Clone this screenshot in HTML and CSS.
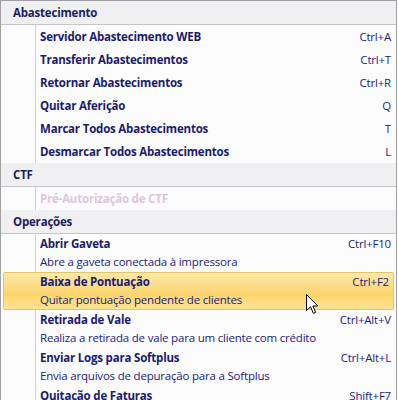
FILE: index.html
```html
<!DOCTYPE html>
<html lang="pt-BR">
<head>
    <meta charset="UTF-8">
    <title>Menu</title>
    <link rel="stylesheet" href="styles.css">
</head>
<body>
    <div class="menu">
        <div class="group-header">Abastecimento</div>
        <div class="items">
            <div class="item"><span class="title">Servidor Abastecimento WEB</span><span class="key">Ctrl+A</span></div>
            <div class="item"><span class="title">Transferir Abastecimentos</span><span class="key">Ctrl+T</span></div>
            <div class="item"><span class="title">Retornar Abastecimentos</span><span class="key">Ctrl+R</span></div>
            <div class="item"><span class="title">Quitar Aferição</span><span class="key">Q</span></div>
            <div class="item"><span class="title">Marcar Todos Abastecimentos</span><span class="key">T</span></div>
            <div class="item"><span class="title">Desmarcar Todos Abastecimentos</span><span class="key">L</span></div>
        </div>

        <div class="group-header">CTF</div>
        <div class="items">
            <div class="item disabled"><span class="title">Pré-Autorização de CTF</span></div>
        </div>

        <div class="group-header">Operações</div>
        <div class="items">
            <div class="item big">
                <div class="line"><span class="title">Abrir Gaveta</span><span class="key">Ctrl+F10</span></div>
                <div class="desc">Abre a gaveta conectada à impressora</div>
            </div>
            <div class="item big hover">
                <div class="line"><span class="title">Baixa de Pontuação</span><span class="key">Ctrl+F2</span></div>
                <div class="desc">Quitar pontuação pendente de clientes</div>
                <svg class="cursor" width="13" height="21" viewBox="0 0 13 21">
                    <path d="M0.5 0.5 L0.5 16.5 L4.5 12.8 L7.3 19.3 L9.6 18.3 L6.9 12 L11.8 12 Z" fill="#fff" stroke="#000" stroke-width="1" stroke-linejoin="miter"/>
                </svg>
            </div>
            <div class="item big">
                <div class="line"><span class="title">Retirada de Vale</span><span class="key">Ctrl+Alt+V</span></div>
                <div class="desc">Realiza a retirada de vale para um cliente com crédito</div>
            </div>
            <div class="item big">
                <div class="line"><span class="title">Enviar Logs para Softplus</span><span class="key">Ctrl+Alt+L</span></div>
                <div class="desc">Envia arquivos de depuração para a Softplus</div>
            </div>
            <div class="item last">
                <span class="title">Quitação de Faturas</span><span class="key">Shift+F7</span>
            </div>
        </div>
    </div>
</body>
</html>
```

FILE: styles.css
```css
body {
    margin: 0;
    background-color: #ffffff;
    font-family: "Open Sans", "Noto Sans", sans-serif;
    font-size: 11.5px;
    letter-spacing: -0.2px;
}

.menu {
    width: 395px;
    border: 1px solid #a0a0a0;
    border-bottom: none;
    background-color: #fcfcfc;
    color: #1b1b6b;
}

.group-header {
    height: 23px;
    line-height: 23px;
    padding-left: 12px;
    background-color: #f0f0f3;
    border-bottom: 1px solid #c6c6c6;
    font-weight: bold;
    color: #1d1d5c;
}

.items {
    background-image: linear-gradient(to right, transparent 34px, #d3d3d3 34px, #d3d3d3 35px, transparent 35px);
}

.item {
    display: flex;
    justify-content: space-between;
    height: 23px;
    line-height: 23px;
    padding: 0 5px 0 39px;
}

.title {
    font-weight: bold;
}

.key {
    color: #1e1e78;
}

.disabled .title {
    color: #dcc6df;
}

.item.big {
    display: block;
    height: 36px;
    line-height: 18px;
    padding-top: 1px;
    padding-bottom: 1px;
}

.item.last {
    height: 15px;
    line-height: 18px;
    padding-top: 1px;
}

.line {
    display: flex;
    justify-content: space-between;
}

.desc {
    color: #22227a;
}

.item.hover {
    position: relative;
    margin: 0 2px;
    padding: 0 4px 0 36px;
    border: 1px solid #e3c36c;
    border-radius: 2px;
    background: linear-gradient(to bottom, #fdeaa9 0%, #fcdc88 35%, #fcd46c 60%, #fde396 100%);
}

.cursor {
    position: absolute;
    left: 302px;
    top: 21px;
}
```
